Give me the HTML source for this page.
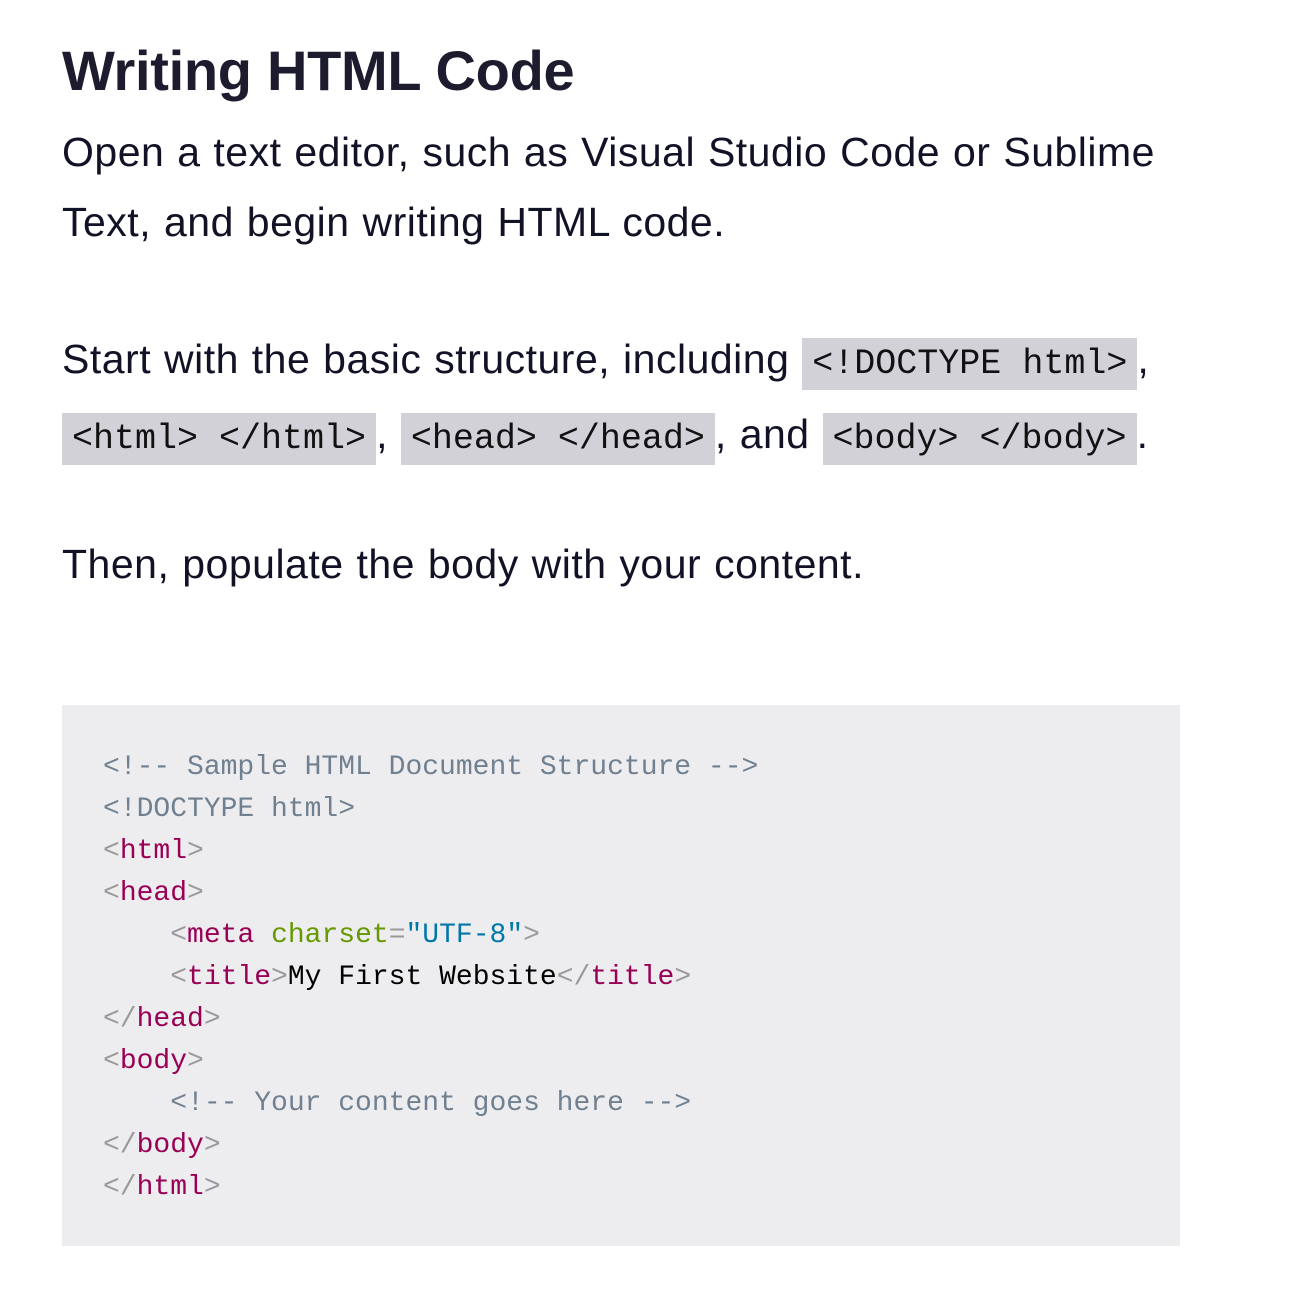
<!DOCTYPE html>
<html><head><style>
body{margin:0;background:#fff;width:1302px;height:1302px;overflow:hidden;font-family:"Liberation Sans",sans-serif;color:#121226}
h1{position:absolute;left:62px;top:38px;margin:0;font-size:56px;font-weight:bold;line-height:66px;color:#1c1c2e;letter-spacing:-0.3px;white-space:nowrap}
p{position:absolute;left:62px;margin:0;font-size:41px;line-height:70px;white-space:nowrap;letter-spacing:0.5px;word-spacing:1px}
code{font-family:"Liberation Mono",monospace;font-size:35px;background:#d2d1d7;padding:6px 10px;color:#111;letter-spacing:0;word-spacing:0}
pre{position:absolute;left:62px;top:705px;width:1118px;height:541px;margin:0;background:#ededef;box-sizing:border-box;padding:42px 41px;font-family:"Liberation Mono",monospace;font-size:28px;line-height:42px;color:#000}
.c{color:#708090}.p{color:#999}.t{color:#990055}.a{color:#669900}.v{color:#0077aa}
</style></head><body>
<h1>Writing HTML Code</h1>
<p style="top:117px">Open a text editor, such as Visual Studio Code or Sublime<br>Text, and begin writing HTML code.</p>
<p style="top:324px">Start with the basic structure, including <code>&lt;!DOCTYPE html&gt;</code>,<br><code>&lt;html&gt; &lt;/html&gt;</code>, <code>&lt;head&gt; &lt;/head&gt;</code>, and <code>&lt;body&gt; &lt;/body&gt;</code>.</p>
<p style="top:529px">Then, populate the body with your content.</p>
<pre><span class="c">&lt;!-- Sample HTML Document Structure --&gt;</span>
<span class="c">&lt;!DOCTYPE html&gt;</span>
<span class="p">&lt;</span><span class="t">html</span><span class="p">&gt;</span>
<span class="p">&lt;</span><span class="t">head</span><span class="p">&gt;</span>
    <span class="p">&lt;</span><span class="t">meta</span> <span class="a">charset</span><span class="p">=</span><span class="v">"UTF-8"</span><span class="p">&gt;</span>
    <span class="p">&lt;</span><span class="t">title</span><span class="p">&gt;</span>My First Website<span class="p">&lt;/</span><span class="t">title</span><span class="p">&gt;</span>
<span class="p">&lt;/</span><span class="t">head</span><span class="p">&gt;</span>
<span class="p">&lt;</span><span class="t">body</span><span class="p">&gt;</span>
    <span class="c">&lt;!-- Your content goes here --&gt;</span>
<span class="p">&lt;/</span><span class="t">body</span><span class="p">&gt;</span>
<span class="p">&lt;/</span><span class="t">html</span><span class="p">&gt;</span></pre>
</body></html>
